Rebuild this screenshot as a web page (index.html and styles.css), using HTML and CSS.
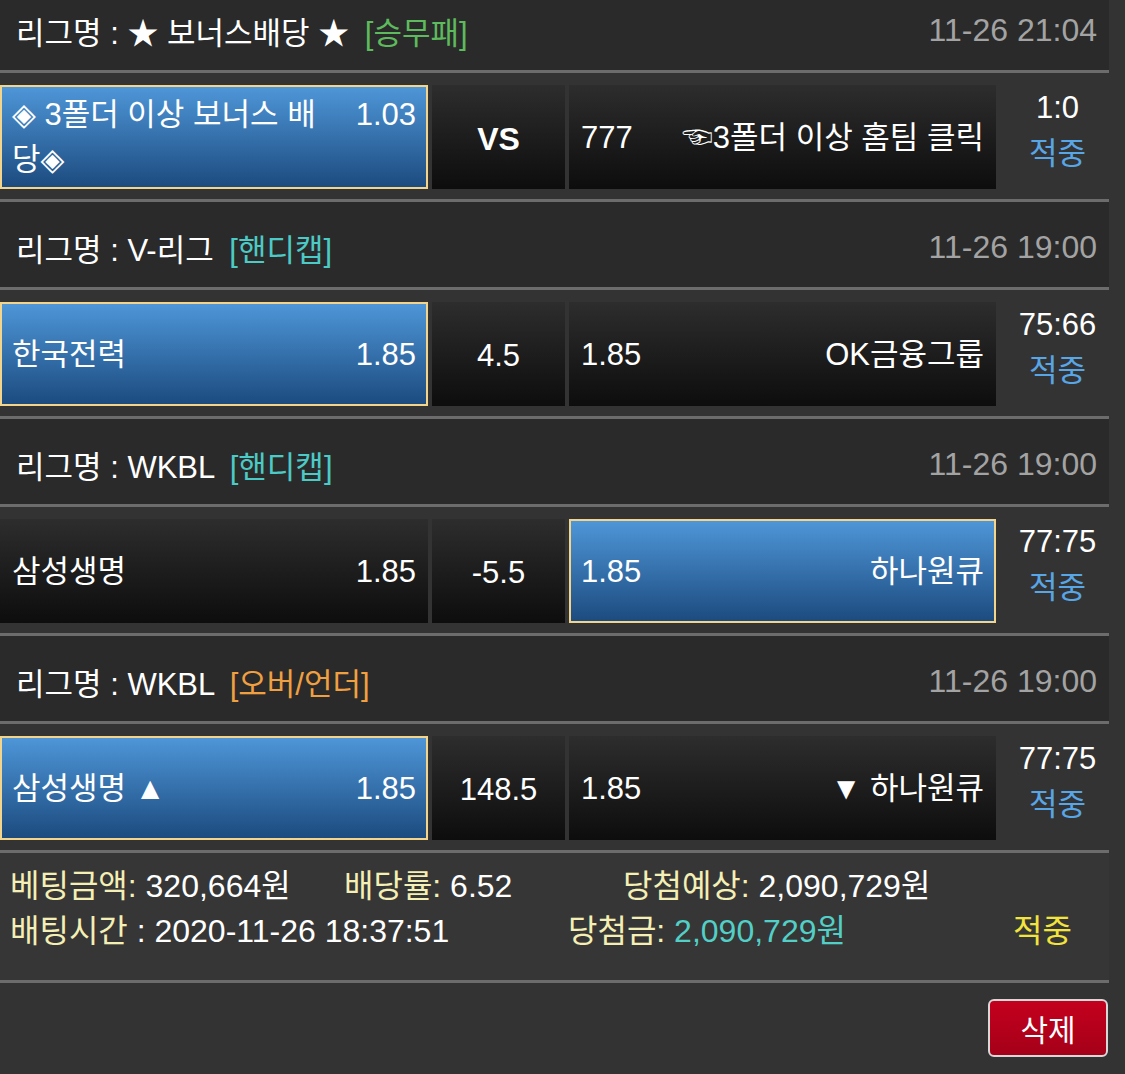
FILE: index.html
```html
<!DOCTYPE html>
<html lang="ko">
<head>
    <meta charset="UTF-8">
    <meta name="viewport" content="width=device-width, initial-scale=1.0">
    <title>베팅내역</title>
    <link rel="stylesheet" href="styles.css">
</head>
<body>
    <div class="page">
        <!-- 보너스 -->
        <div class="league first">
            <div class="league-name">리그명 : ★ 보너스배당 ★ <span class="tag green">[승무패]</span></div>
            <div class="league-time">11-26 21:04</div>
        </div>
        <div class="match">
            <div class="cell home selected">
                <div class="pick"><span class="odds">1.03</span>◈ 3폴더 이상 보너스 배당◈</div>
            </div>
            <div class="cell mid"><b>VS</b></div>
            <div class="cell away">
                <div class="pick"><span>777</span><span>☜3폴더 이상 홈팀 클릭</span></div>
            </div>
            <div class="result">
                <div>1:0</div>
                <div class="hit">적중</div>
            </div>
        </div>

        <!-- V-리그 -->
        <div class="league">
            <div class="league-name">리그명 : V-리그 <span class="tag cyan">[핸디캡]</span></div>
            <div class="league-time">11-26 19:00</div>
        </div>
        <div class="match">
            <div class="cell home selected">
                <div class="pick"><span class="odds">1.85</span>한국전력</div>
            </div>
            <div class="cell mid">4.5</div>
            <div class="cell away">
                <div class="pick"><span>1.85</span><span>OK금융그룹</span></div>
            </div>
            <div class="result">
                <div>75:66</div>
                <div class="hit">적중</div>
            </div>
        </div>

        <!-- WKBL 핸디캡 -->
        <div class="league">
            <div class="league-name">리그명 : WKBL <span class="tag cyan">[핸디캡]</span></div>
            <div class="league-time">11-26 19:00</div>
        </div>
        <div class="match">
            <div class="cell home">
                <div class="pick"><span class="odds">1.85</span>삼성생명</div>
            </div>
            <div class="cell mid">-5.5</div>
            <div class="cell away selected">
                <div class="pick"><span>1.85</span><span>하나원큐</span></div>
            </div>
            <div class="result">
                <div>77:75</div>
                <div class="hit">적중</div>
            </div>
        </div>

        <!-- WKBL 오버/언더 -->
        <div class="league">
            <div class="league-name">리그명 : WKBL <span class="tag orange">[오버/언더]</span></div>
            <div class="league-time">11-26 19:00</div>
        </div>
        <div class="match">
            <div class="cell home selected">
                <div class="pick"><span class="odds">1.85</span>삼성생명 ▲</div>
            </div>
            <div class="cell mid">148.5</div>
            <div class="cell away">
                <div class="pick"><span>1.85</span><span>▼ 하나원큐</span></div>
            </div>
            <div class="result">
                <div>77:75</div>
                <div class="hit">적중</div>
            </div>
        </div>

        <div class="summary">
            <div class="summary-line">
                <div class="item w1"><span class="label">베팅금액:</span> 320,664원</div>
                <div class="item w2"><span class="label">배당률:</span> 6.52</div>
                <div class="item"><span class="label">당첨예상:</span> 2,090,729원</div>
            </div>
            <div class="summary-line">
                <div class="item w3"><span class="label">배팅시간</span> : 2020-11-26 18:37:51</div>
                <div class="item w4"><span class="label">당첨금:</span> <span class="win">2,090,729원</span></div>
                <div class="item status">적중</div>
            </div>
        </div>

        <div class="actions">
            <button type="button" class="btn-delete">삭제</button>
        </div>
    </div>
</body>
</html>
```

FILE: styles.css
```css
body {
    margin: 0;
    padding: 0;
    background: #333333;
    color: #ffffff;
    font-family: "Liberation Sans", "Noto Sans CJK KR", "DejaVu Sans", sans-serif;
    overflow: hidden;
}

.page {
    width: 1109px;
    background: #333333;
}

.league {
    display: flex;
    align-items: center;
    justify-content: space-between;
    height: 88px;
    padding: 6px 12px 0 16px;
    box-sizing: border-box;
    background: #2a2a2a;
    border-bottom: 3px solid #6c6c6c;
    font-size: 31px;
}

.league.first {
    margin-top: -15px;
}

.tag {
    margin-left: 7px;
}

.tag.green {
    color: #5dbb5d;
}

.tag.cyan {
    color: #4ccac6;
}

.tag.orange {
    color: #f0a040;
}

.league-time {
    color: #a3a3a3;
    font-size: 32px;
}

.match {
    display: flex;
    gap: 4px;
    padding: 12px 0 10px;
    border-bottom: 3px solid #6c6c6c;
    font-size: 31px;
}

.cell {
    display: flex;
    align-items: center;
    height: 104px;
    box-sizing: border-box;
    padding: 0 12px;
    background: linear-gradient(to bottom, #2d2d2d, #0d0d0d);
}

.cell.home {
    width: 428px;
}

.cell.mid {
    width: 133px;
    justify-content: center;
    padding-top: 4px;
}

.cell.mid b {
    font-size: 32px;
}

.cell.away {
    width: 427px;
}

.cell.selected {
    padding: 0 10px;
    background: linear-gradient(to bottom, #4e96d8, #1c4b7f);
    border: 2px solid #f2d48c;
}

.pick {
    width: 100%;
    line-height: 45px;
}

.odds {
    float: right;
    margin-left: 24px;
}

.away .pick {
    display: flex;
    justify-content: space-between;
}

.result {
    flex: 1;
    margin-top: -12px;
    padding: 12px 0 0 6px;
    text-align: center;
    line-height: 46px;
}

.hit {
    color: #58a6e6;
}

.summary {
    padding: 11px 10px 26px;
    border-bottom: 3px solid #6c6c6c;
    font-size: 32px;
    line-height: 45px;
    background: #363636;
}

.summary-line {
    display: flex;
}

.label {
    color: #f4efb4;
}

.w1 {
    width: 334px;
}

.w2 {
    width: 279px;
}

.w3 {
    width: 558px;
}

.w4 {
    width: 445px;
}

.win {
    color: #52cfc6;
}

.status {
    color: #f2e43c;
}

.actions {
    display: flex;
    justify-content: flex-end;
    padding: 16px 1px 20px 0;
}

.btn-delete {
    width: 120px;
    height: 58px;
    border: 2px solid #d8d8d8;
    border-radius: 6px;
    background: linear-gradient(to bottom, #c4001e, #a50018);
    color: #ffffff;
    font-family: inherit;
    font-size: 30px;
}
```
